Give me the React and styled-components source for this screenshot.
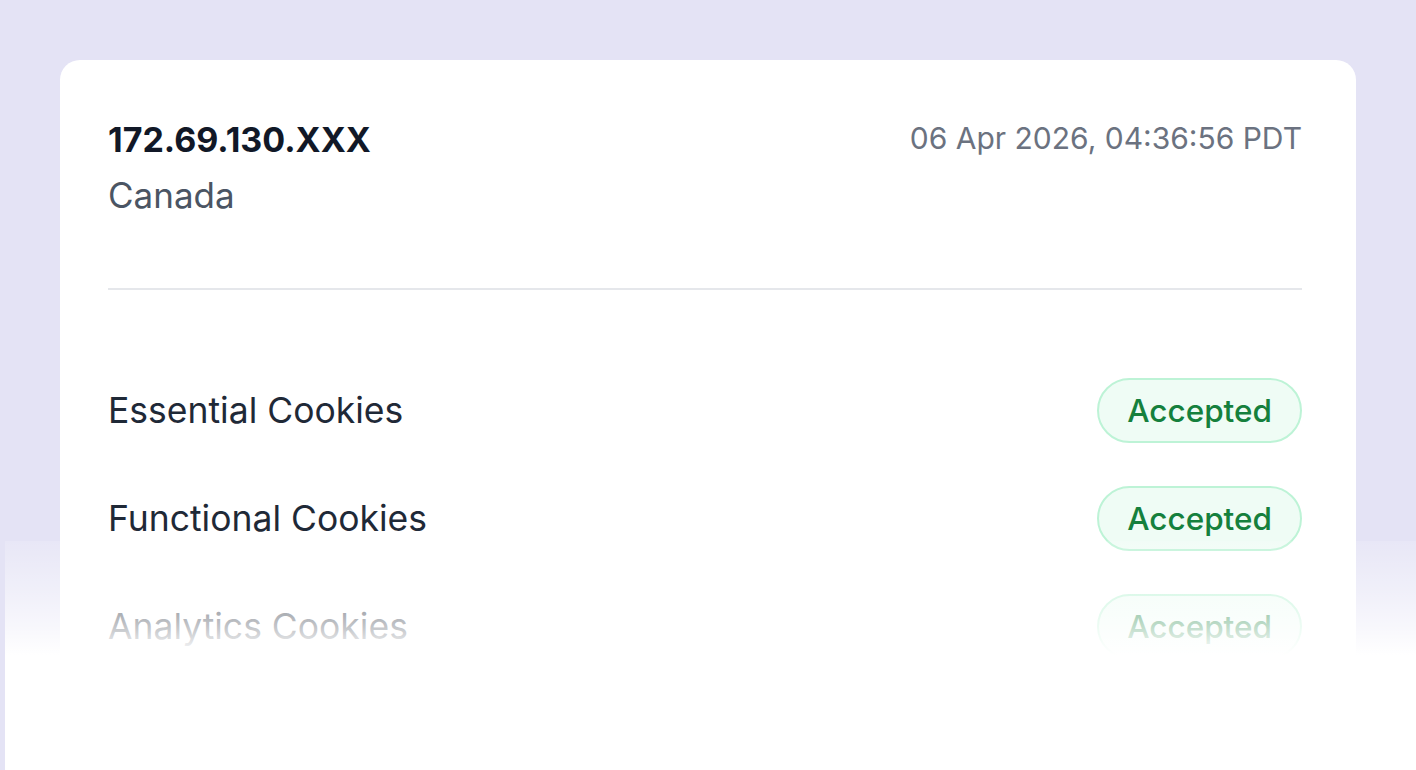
import styled, { createGlobalStyle } from "styled-components";

const GlobalStyle = createGlobalStyle`
  html, body {
    margin: 0;
    height: 100%;
    overflow: hidden;
    background: #e4e3f5;
    font-family: Inter, "Noto Sans", sans-serif;
  }
`;

const cookies = [
  { name: "Essential Cookies", status: "Accepted" },
  { name: "Functional Cookies", status: "Accepted" },
  { name: "Analytics Cookies", status: "Accepted" },
  { name: "Marketing Cookies", status: "Accepted" },
];

export default function App() {
  return (
    <Page>
      <GlobalStyle />
      <Card>
        <Header>
          <Visitor>
            <Ip>172.69.130.XXX</Ip>
            <Country>Canada</Country>
          </Visitor>
          <Stamp>06 Apr 2026, 04:36:56 PDT</Stamp>
        </Header>
        <List>
          {cookies.map((c) => (
            <Row key={c.name}>
              <Name>{c.name}</Name>
              <Pill>{c.status}</Pill>
            </Row>
          ))}
        </List>
      </Card>
      <Fade />
    </Page>
  );
}

const Page = styled.div`
  height: 770px;
  padding: 60px 60px 0;
  box-sizing: border-box;
  position: relative;
  overflow: hidden;
`;

const Card = styled.div`
  background: #fff;
  border-radius: 20px;
  padding: 58px 54px 60px 48px;
  height: 900px;
  box-sizing: border-box;
`;

const Header = styled.div`
  display: flex;
  justify-content: space-between;
  align-items: flex-start;
  padding-bottom: 70px;
  border-bottom: 2px solid #e5e7eb;
`;

const Visitor = styled.div`
  display: flex;
  flex-direction: column;
  gap: 10px;
`;

const Ip = styled.div`
  font-size: 34px;
  font-weight: 700;
  color: #111827;
  line-height: 44px;
`;

const Country = styled.div`
  font-size: 35px;
  color: #4b5563;
  line-height: 46px;
`;

const Stamp = styled.div`
  font-size: 30px;
  color: #6b7280;
  line-height: 40px;
`;

const List = styled.div`
  display: flex;
  flex-direction: column;
  gap: 43px;
  padding-top: 88px;
`;

const Row = styled.div`
  display: flex;
  justify-content: space-between;
  align-items: center;
`;

const Name = styled.div`
  font-size: 35.5px;
  color: #1f2937;
`;

const Pill = styled.div`
  height: 65px;
  box-sizing: border-box;
  padding: 0 28px;
  display: flex;
  align-items: center;
  border-radius: 999px;
  background: #effcf5;
  border: 2px solid #bdf3d6;
  color: #15803d;
  font-size: 31.5px;
  font-weight: 500;
`;

/* white wash over the lower part of the page */
const Fade = styled.div`
  position: absolute;
  left: 5px;
  right: 0;
  top: 541px;
  bottom: 0;
  background: linear-gradient(
    to bottom,
    rgba(255, 255, 255, 0.15) 0px,
    rgba(255, 255, 255, 0.45) 50px,
    rgba(255, 255, 255, 0.74) 87px,
    #fff 114px
  );
`;
